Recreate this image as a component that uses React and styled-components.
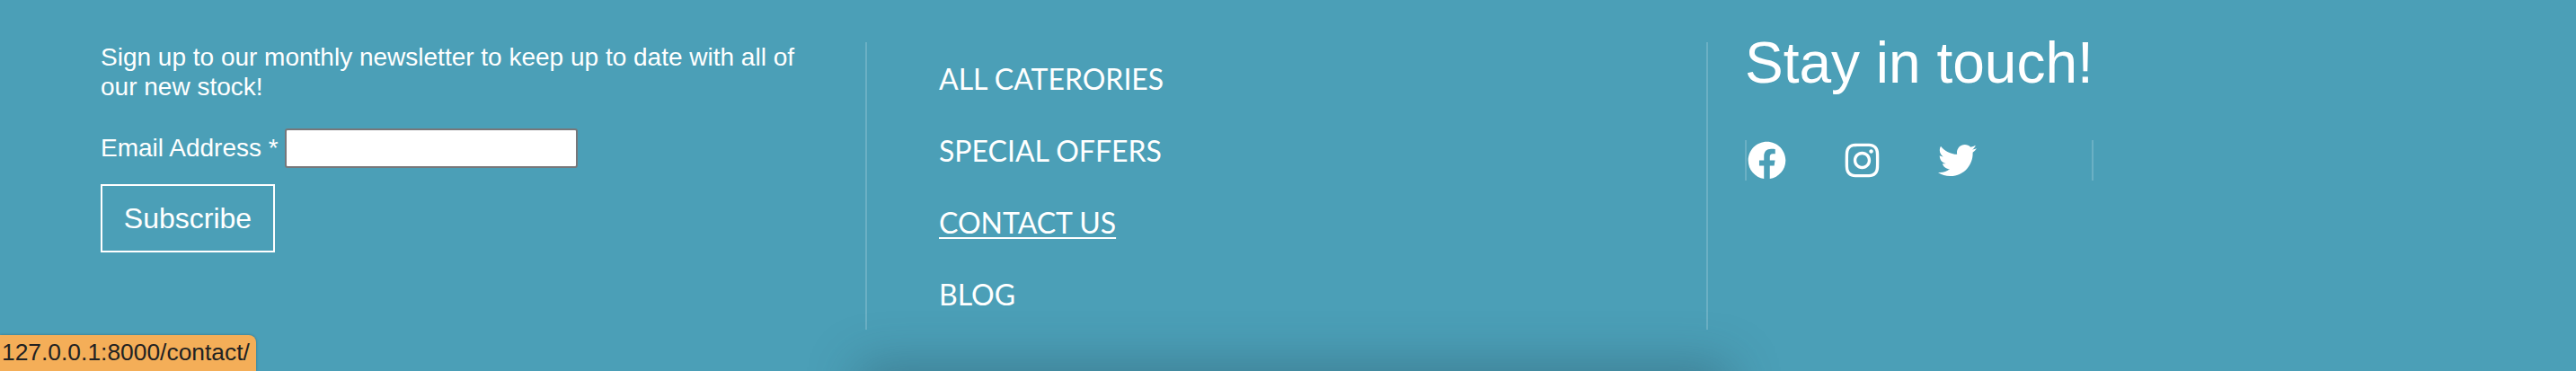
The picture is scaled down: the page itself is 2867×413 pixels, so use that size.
import React from "react";
import styled, { createGlobalStyle } from "styled-components";
import { FaFacebook, FaInstagram, FaTwitter } from "react-icons/fa";

const GlobalStyle = createGlobalStyle`
  html, body {
    margin: 0;
    padding: 0;
    overflow: hidden;
    background: #4b9fb7;
  }
`;

const Footer = styled.footer`
  position: relative;
  box-sizing: border-box;
  width: 100%;
  height: 413px;
  padding-top: 47px;
  display: flex;
  align-items: flex-start;
  background: #4b9fb7;
  color: #fff;
  overflow: hidden;
  font-family: "Liberation Sans", Arial, sans-serif;
`;

const NewsletterColumn = styled.section`
  box-sizing: border-box;
  width: 963px;
  padding: 0 70px 0 112px;
`;

const Intro = styled.p`
  margin: 0 0 30px;
  font-size: 28px;
  line-height: 33px;
`;

const EmailRow = styled.label`
  display: flex;
  align-items: center;
  gap: 7px;
  font-size: 28px;
  line-height: 44px;
`;

const EmailInput = styled.input`
  box-sizing: border-box;
  width: 326px;
  height: 44px;
  background: #fff;
  border: 2px solid #77777a;
  border-radius: 3px;
  padding: 0;
`;

const SubscribeButton = styled.button`
  display: block;
  box-sizing: border-box;
  width: 194px;
  height: 76px;
  margin-top: 18px;
  padding: 0;
  background: transparent;
  border: 2px solid #fff;
  color: #fff;
  font-family: inherit;
  font-size: 32px;
`;

const NavColumn = styled.nav`
  box-sizing: border-box;
  width: 938px;
  padding-left: 80px;
  border-left: 2px solid rgba(255, 255, 255, 0.18);
  border-right: 2px solid rgba(255, 255, 255, 0.18);
  display: flex;
  flex-direction: column;
`;

const NavLink = styled.a`
  height: 80px;
  display: flex;
  align-items: center;
  font-family: Lato, sans-serif;
  font-size: 32px;
  color: #fff;

  span {
    text-decoration: ${(props) => (props.$active ? "underline" : "none")};
    text-decoration-thickness: 2px;
    text-underline-offset: 4px;
  }
`;

const SocialColumn = styled.section`
  padding-left: 41px;
  margin-top: -47px;
`;

const Heading = styled.h2`
  margin: 0;
  padding-top: 33px;
  font-size: 64px;
  font-weight: 400;
  line-height: 74px;
`;

const SocialRow = styled.div`
  box-sizing: border-box;
  width: 388px;
  height: 45px;
  margin-top: 49px;
  padding-left: 1px;
  display: flex;
  align-items: center;
  gap: 63px;
  border-left: 2px solid rgba(255, 255, 255, 0.18);
  border-right: 2px solid rgba(255, 255, 255, 0.18);
  font-size: 43px;

  svg {
    display: block;
  }
`;

const StatusBubble = styled.div`
  position: absolute;
  left: 0;
  bottom: 0;
  box-sizing: border-box;
  width: 285px;
  height: 40px;
  padding: 3px 0 0 2px;
  background: #f4ae58;
  border-top-right-radius: 8px;
  box-shadow: 0 0 3px rgba(0, 0, 0, 0.3);
  color: #222;
  font-size: 26.4px;
  line-height: 32px;
  white-space: nowrap;
`;

const PageShadow = styled.div`
  position: absolute;
  left: 970px;
  bottom: -38px;
  width: 940px;
  height: 30px;
  box-shadow: 0 0 55px 14px rgba(40, 70, 85, 0.4);
`;

const links = [
  { label: "ALL CATERORIES" },
  { label: "SPECIAL OFFERS" },
  { label: "CONTACT US", active: true },
  { label: "BLOG" },
];

export default function App() {
  return (
    <>
      <GlobalStyle />
      <Footer>
        <NewsletterColumn>
          <Intro>Sign up to our monthly newsletter to keep up to date with all of our new stock!</Intro>
          <EmailRow>
            Email Address *
            <EmailInput type="email" />
          </EmailRow>
          <SubscribeButton type="button">Subscribe</SubscribeButton>
        </NewsletterColumn>
        <NavColumn>
          {links.map((link) => (
            <NavLink key={link.label} $active={link.active}>
              <span>{link.label}</span>
            </NavLink>
          ))}
        </NavColumn>
        <SocialColumn>
          <Heading>Stay in touch!</Heading>
          <SocialRow>
            <FaFacebook />
            <FaInstagram />
            <FaTwitter />
          </SocialRow>
        </SocialColumn>
        <PageShadow />
        <StatusBubble>127.0.0.1:8000/contact/</StatusBubble>
      </Footer>
    </>
  );
}
